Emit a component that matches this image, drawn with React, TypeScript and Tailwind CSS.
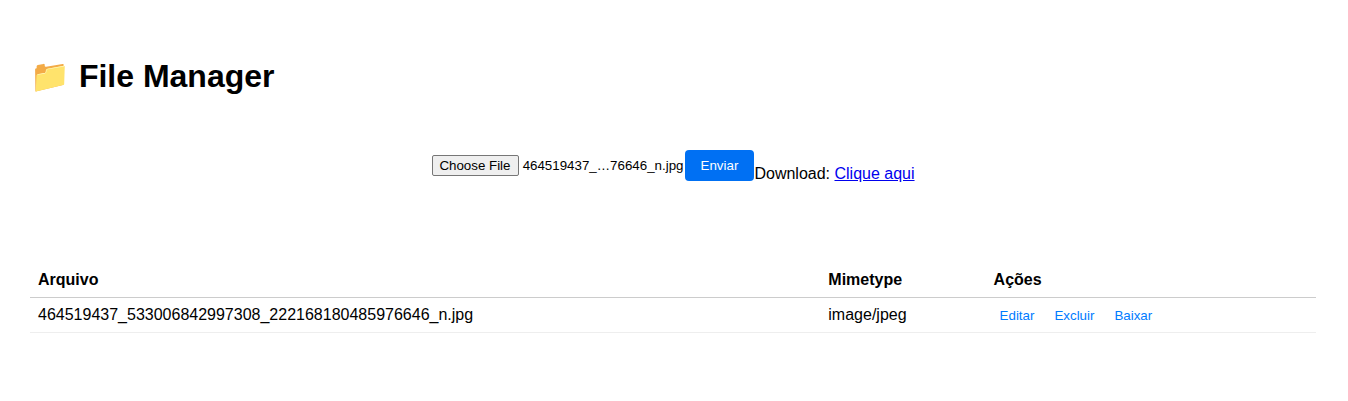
export default function App() {
  return (
    <main className="min-h-[401px] bg-white pt-[51px] pr-8 pl-[30px] font-['Liberation_Sans',Arial,sans-serif] text-base text-black">
      <h1 className="h-[50px] text-[32px] leading-[50px] font-bold">📁 File Manager</h1>
      <form className="mt-[49px] flex h-[31px] items-start justify-center">
        <div className="flex h-[31px] w-[253px] items-center">
          <button type="button" className="h-[21px] w-[87px] shrink-0 rounded-[2px] border border-[#767676] bg-[#efefef] pr-px text-[13.3333px] leading-[15px]">Choose File</button>
          <span className="ml-[3.7px] text-[13.3333px] leading-[21px] whitespace-nowrap">464519437_…76646_n.jpg</span>
        </div>
        <button type="button" className="h-[31px] w-[69px] rounded-[4px] bg-[#0070f3] text-[13.3333px] text-white">Enviar</button>
        <p className="-mr-[0.5px] pt-[15px] pl-[0.5px] leading-[18px]">Download: <a href="#" className="text-[#0000ee] underline">Clique aqui</a></p>
      </form>
      <table className="mt-[81px] w-[1286px] table-fixed border-collapse text-left leading-[18px]">
        <colgroup><col className="w-[790px]" /><col className="w-[165px]" /><col /></colgroup>
        <thead><tr className="h-[35px] border-b border-[#cccccc]">
          <th className="px-2 pt-[9px] pb-[7px]">Arquivo</th><th className="pt-[9px] pb-[7px] pl-[8.3px]">Mimetype</th><th className="pt-[9px] pb-[7px] pl-[8.6px]">Ações</th>
        </tr></thead>
        <tbody><tr className="h-[35px] border-b border-[#eeeeee]">
          <td className="px-2">464519437_533006842997308_222168180485976646_n.jpg</td><td className="pl-[8.3px]">image/jpeg</td>
          <td className="pl-[8.6px]"><div className="flex gap-[20px] pt-px pl-[6px] text-[13.3333px] leading-[15px] text-[#007bff]"><button>Editar</button><button>Excluir</button><button>Baixar</button></div></td>
        </tr></tbody>
      </table>
    </main>
  );
}
